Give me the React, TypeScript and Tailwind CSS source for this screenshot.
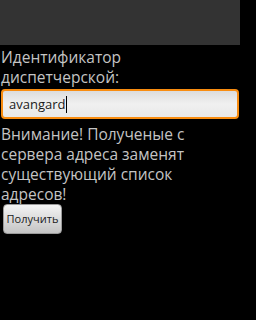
export default function App() {
  return (
    <div className="w-[256px] h-[320px] bg-black overflow-hidden" style={{ fontFamily: '"Open Sans", "DejaVu Sans", sans-serif' }}>
      <div className="w-[240px] h-[45px] bg-[#333333]" />
      <div className="pt-[3px] text-[15.5px] leading-[19.5px] text-[#c4c4c4] pl-[1px]">
        Идентификатор
        <br />
        диспетчерской:
      </div>
      <div className="ml-[1px] mt-[2px] w-[238px] h-[30px] rounded-[4px] border-2 border-[#f88c10] bg-gradient-to-b from-[#dcdcdc] via-[#f0f0f0] to-[#e8e8e8] flex items-center pl-[6px]">
        <span className="text-[13px] text-[#1a1a1a] leading-none">avangard</span>
        <span className="w-[1px] h-[17px] bg-black ml-[1px]" />
      </div>
      <div className="mt-[5px] text-[15.5px] leading-[20px] text-[#c4c4c4] pl-[1px]">
        Внимание! Полученые с
        <br />
        сервера адреса заменят
        <br />
        существующий список
        <br />
        адресов!
      </div>
      <button className="ml-[3px] mt-[0px] w-[59px] h-[30px] rounded-[4px] bg-gradient-to-b from-[#f4f4f4] to-[#c4c4c4] text-[11px] text-[#1a1a1a] flex items-center justify-center border border-[#9a9a9a]">
        Получить
      </button>
    </div>
  );
}
